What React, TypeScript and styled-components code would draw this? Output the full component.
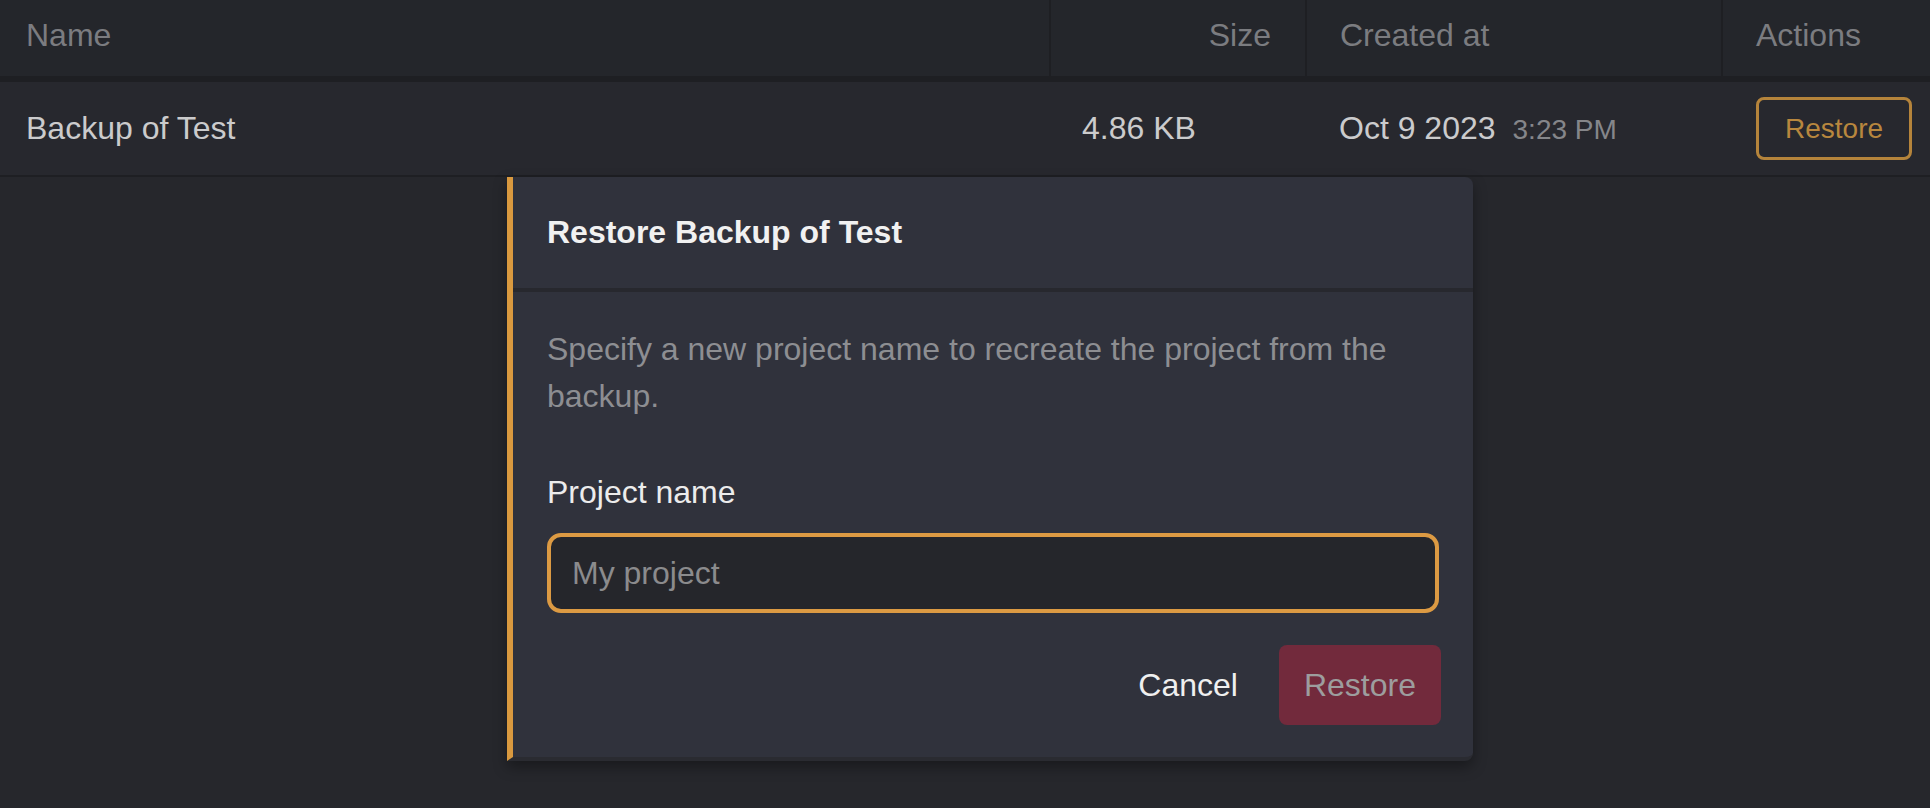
import styled, {createGlobalStyle} from 'styled-components';

const GlobalStyle = createGlobalStyle`
  body {
    margin: 0;
    background-color: #26272c;
    font-family: 'Liberation Sans', Arial, sans-serif;
  }
  * {
    box-sizing: border-box;
  }
`;

const Page = styled.div`
  width: 1930px;
  min-height: 808px;
  background-color: #26272c;
  font-size: 32px;
`;

const columns = '1049px 256px 416px 1fr';

const HeaderRow = styled.div`
  display: grid;
  grid-template-columns: ${columns};
  height: 82px;
  background-color: #24262b;
  border-bottom: 6px solid #1e1f23;
`;

const HeaderCell = styled.div<{$right?: boolean; $first?: boolean}>`
  padding: 12px 34px 0 ${props => (props.$first ? '26px' : '33px')};
  border-left: ${props => (props.$first ? 'none' : '2px solid #1e1f23')};
  text-align: ${props => (props.$right ? 'right' : 'left')};
  color: #7b7c80;
  line-height: 47px;
`;

const Row = styled.div`
  display: grid;
  grid-template-columns: ${columns};
  height: 95px;
  align-items: center;
  background-color: #27282e;
  border-bottom: 2px solid #1e1f23;
`;

const Cell = styled.div<{$pad?: number}>`
  padding-left: ${props => props.$pad ?? 35}px;
  color: #cbcbcc;
  display: flex;
  align-items: baseline;
  white-space: nowrap;
`;

const Time = styled.span`
  margin-left: 17px;
  font-size: 28px;
  color: #85868a;
`;

const OutlineButton = styled.button`
  height: 63px;
  padding: 0 26px;
  background: transparent;
  border: 3px solid #b5843b;
  border-radius: 8px;
  color: #b8873e;
  font-family: inherit;
  font-size: 28px;
`;

const Dialog = styled.div`
  margin-left: 507px;
  width: 966px;
  background-color: #30323c;
  border-left: 6px solid #d9993f;
  border-bottom: 4px solid #2a2b31;
  border-radius: 0 8px 8px 0;
  box-shadow: 0 6px 14px rgba(0, 0, 0, 0.35);
`;

const DialogHeader = styled.div`
  height: 115px;
  padding: 0 34px;
  display: flex;
  align-items: center;
  border-bottom: 4px solid #27282e;
`;

const Title = styled.h2`
  margin: 0;
  font-size: 32px;
  font-weight: bold;
  color: #f1f1f1;
`;

const DialogBody = styled.div`
  padding: 34px 34px 0;
`;

const Description = styled.p`
  margin: 0;
  line-height: 47px;
  color: #8d8e92;
`;

const Label = styled.label`
  display: block;
  margin-top: 49px;
  line-height: 47px;
  color: #ececec;
`;

const NameInput = styled.input`
  display: block;
  width: 100%;
  height: 80px;
  margin-top: 17px;
  padding: 0 21px;
  background-color: #25262b;
  border: 4px solid #dc9a43;
  border-radius: 14px;
  color: #d0d0d0;
  caret-color: #ffffff;
  font-family: inherit;
  font-size: 32px;
  &::placeholder {
    color: #8b8b8d;
  }
  &:focus {
    outline: none;
  }
`;

const Footer = styled.div`
  display: flex;
  justify-content: flex-end;
  gap: 16px;
  padding: 32px 32px 32px 34px;
`;

const FooterButton = styled.button<{$primary?: boolean}>`
  height: 80px;
  padding: 0 25px;
  border: none;
  border-radius: 8px;
  background-color: ${props => (props.$primary ? '#722a3c' : 'transparent')};
  color: ${props => (props.$primary ? '#9d9d9e' : '#efefef')};
  font-family: inherit;
  font-size: 32px;
`;

const App = () => {
  return (
    <Page>
      <GlobalStyle />
      <HeaderRow>
        <HeaderCell $first>Name</HeaderCell>
        <HeaderCell $right>Size</HeaderCell>
        <HeaderCell>Created at</HeaderCell>
        <HeaderCell>Actions</HeaderCell>
      </HeaderRow>
      <Row>
        <Cell $pad={26}>Backup of Test</Cell>
        <Cell $pad={33}>4.86 KB</Cell>
        <Cell $pad={34}>
          Oct 9 2023
          <Time>3:23 PM</Time>
        </Cell>
        <Cell>
          <OutlineButton>Restore</OutlineButton>
        </Cell>
      </Row>
      <Dialog>
        <DialogHeader>
          <Title>Restore Backup of Test</Title>
        </DialogHeader>
        <DialogBody>
          <Description>
            Specify a new project name to recreate the project from the backup.
          </Description>
          <Label htmlFor="project-name">Project name</Label>
          <NameInput id="project-name" placeholder="My project" autoFocus />
        </DialogBody>
        <Footer>
          <FooterButton>Cancel</FooterButton>
          <FooterButton $primary disabled>
            Restore
          </FooterButton>
        </Footer>
      </Dialog>
    </Page>
  );
};

export default App;
